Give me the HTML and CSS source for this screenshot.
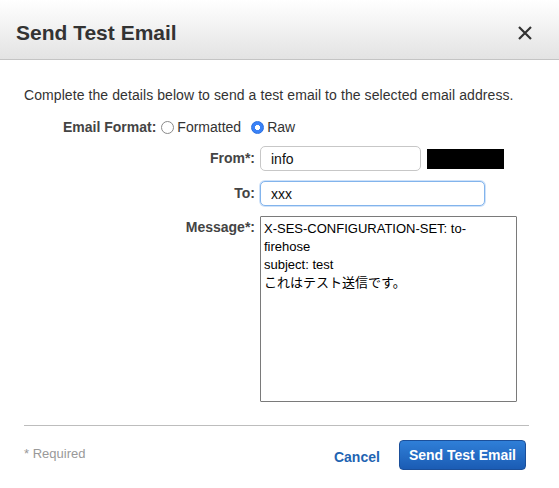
FILE: index.html
```html
<!DOCTYPE html>
<html lang="en">
<head>
  <meta charset="UTF-8" />
  <meta name="viewport" content="width=device-width, initial-scale=1.0" />
  <title>Send Test Email</title>
  <link rel="stylesheet" href="styles.css">
</head>
<body>
  <div class="modal">
    <div class="modal-header">
      <h1>Send Test Email</h1>
      <button class="close" aria-label="Close">
        <svg width="14" height="14" viewBox="0 0 14 14"><path d="M1 1L13 13M13 1L1 13" stroke="#333" stroke-width="2.2" fill="none"/></svg>
      </button>
    </div>
    <div class="modal-body">
      <p class="intro">Complete the details below to send a test email to the selected email address.</p>
      <div class="format-row">
        <span class="label">Email Format:</span>
        <label class="radio"><input type="radio" name="fmt" /> Formatted</label>
        <label class="radio"><input type="radio" name="fmt" checked /> Raw</label>
      </div>
      <div class="form-grid">
        <label class="label" for="from">From*:</label>
        <div class="field">
          <input type="text" id="from" class="text from" value="info" />
          <span class="redact"></span>
        </div>
        <label class="label" for="to">To:</label>
        <div class="field">
          <input type="text" id="to" class="text to focus" value="xxx" />
        </div>
        <label class="label label-top" for="message">Message*:</label>
        <div class="field">
          <textarea id="message" class="message">X-SES-CONFIGURATION-SET: to-firehose
subject: test
これはテスト送信です。</textarea>
        </div>
      </div>
      <div class="footer">
        <span class="required">* Required</span>
        <div class="actions">
          <a class="cancel" href="#">Cancel</a>
          <button class="primary">Send Test Email</button>
        </div>
      </div>
    </div>
  </div>
</body>
</html>
```

FILE: styles.css
```css
body { margin: 0; background: #fff; font-family: "Liberation Sans", Arial, "Noto Sans CJK JP", sans-serif; color: #333; font-size: 14px; }
.modal { width: 559px; }
.modal-header { height: 59px; display: flex; align-items: center; justify-content: space-between; padding: 0 27px 0 16px; background: linear-gradient(#ffffff, #e3e3e3); border-bottom: 1px solid #c4c4c4; box-sizing: content-box; }
.modal-header h1 { margin: 0; font-size: 21px; font-weight: bold; color: #333; padding-top: 6px; }
.close { background: none; border: none; padding: 0; width: 14px; height: 14px; cursor: pointer; margin-top: 6px; }
.close svg { display: block; }
.modal-body { padding: 0 30px 0 24px; }
.intro { margin: 26px 0 0; line-height: 18px; color: #333; letter-spacing: 0.08px; }
.format-row { display: flex; align-items: center; margin-top: 14px; padding-left: 39px; height: 18px; }
.format-row .label { margin-right: 5px; }
.label { font-weight: bold; color: #444; text-align: right; }
.radio { display: flex; align-items: center; margin-right: 10px; color: #333; }
.radio input { appearance: none; -webkit-appearance: none; width: 13px; height: 13px; margin: 0 3px 0 0; border: 1px solid #8a8a8a; border-radius: 50%; background: #fff; box-sizing: border-box; }
.radio input:checked { border: 1px solid #2a6fe0; background: radial-gradient(circle, #fff 0 2.3px, #3a82f7 2.8px); }
.form-grid { display: grid; grid-template-columns: 231px 1fr; column-gap: 5px; row-gap: 10px; margin-top: 10px; align-items: center; }
.form-grid .label { padding-bottom: 2px; }
.form-grid .label-top { align-self: start; padding-top: 3px; }
.field { display: flex; align-items: center; }
.text { height: 25px; box-sizing: border-box; border: 1px solid #c7c7c7; border-radius: 5px; padding: 0 10px; font: 14px "Liberation Sans", Arial, sans-serif; color: #111; outline: none; }
.from { width: 161px; }
.to { width: 225px; }
.focus { border-color: #82b4ec; box-shadow: 0 0 0 1px #cfe2f9; }
.redact { display: inline-block; width: 77px; height: 20px; background: #000; margin-left: 6px; }
.message { width: 257px; height: 186px; box-sizing: border-box; border: 1px solid #7a7a7a; border-radius: 1px; padding: 3px 14px 3px 3px; font: 13px/18px "Liberation Sans", Arial, "Noto Sans CJK JP", sans-serif; color: #000; resize: none; outline: none; }
.footer { margin-top: 23px; border-top: 1px solid #bdbdbd; padding-top: 14px; display: flex; justify-content: space-between; align-items: flex-start; }
.required { color: #999; font-size: 13px; margin-top: 6px; }
.actions { display: flex; align-items: center; gap: 19px; margin-right: 3px; }
.cancel { color: #1f64b2; font-weight: bold; text-decoration: none; font-size: 14px; margin-top: 3px; }
.primary { height: 30px; padding: 0 9px; border: 1px solid #1b4f9a; border-radius: 4px; background: linear-gradient(#2f7fd8, #1b5cb4); color: #fff; font: bold 14px "Liberation Sans", Arial, sans-serif; cursor: pointer; }
```
